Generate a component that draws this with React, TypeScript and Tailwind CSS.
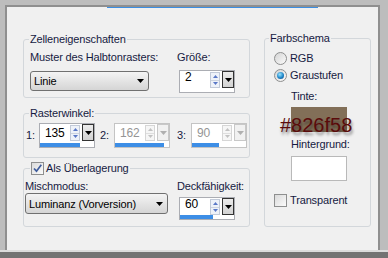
import React from "react";

const LBL = "text-[#161a42]";

function Tri({ color = "#000", w = 7, h = 4, up = false }: { color?: string; w?: number; h?: number; up?: boolean }) {
  return (
    <svg width={w} height={h} viewBox={`0 0 ${w} ${h}`} className="block">
      <path d={up ? `M${w / 2} 0L${w} ${h}H0Z` : `M0 0H${w}L${w / 2} ${h}Z`} fill={color} />
    </svg>
  );
}

function Dropdown({ text, cls }: { text: string; cls: string }) {
  return (
    <div
      className={`flex items-center justify-between rounded-[3px] border border-[#707070] bg-linear-to-b from-[#f4f4f4] to-[#d5d5d5] pl-[3px] pr-[4px] text-[11px] leading-[14px] text-black ${cls}`}
    >
      <span className="whitespace-nowrap">{text}</span>
      <Tri />
    </div>
  );
}

function Spinner({
  value,
  disabled = false,
  bar = 0,
  tall = false,
}: {
  value: string;
  disabled?: boolean;
  bar?: number;
  tall?: boolean;
}) {
  const arrowColor = disabled ? "#c2c2c2" : "#5a78c6";
  return (
    <div
      className={`flex flex-col w-[56px] ${tall ? "h-[25px]" : "h-[23px]"} bg-white border ${
        disabled ? "border-[#c4c4c4]" : "border-[#abadb3]"
      }`}
    >
      <div className="flex items-start">
        <div
          className={`flex-1 pl-[5px] ${tall ? "pt-[3px]" : "pt-0"} text-[12px] leading-[12px] ${
            disabled ? "text-[#959595]" : "text-black"
          }`}
        >
          {value}
        </div>
        <div
          className={`mt-[1px] flex flex-col w-[10px] h-[16px] border ${
            disabled ? "border-[#d6d6d6] bg-[#f6f6f6]" : "border-[#c2cad8] bg-[#eef2f9]"
          }`}
        >
          <div className="flex-1 flex items-center justify-center">
            <Tri color={arrowColor} w={5} h={3} up />
          </div>
          <div className={`h-px ${disabled ? "bg-[#dedede]" : "bg-[#ccd3df]"}`} />
          <div className="flex-1 flex items-center justify-center">
            <Tri color={arrowColor} w={5} h={3} />
          </div>
        </div>
        <div
          className={`ml-[2px] w-[12px] h-[17px] border flex items-center justify-center ${
            disabled ? "border-[#c8c8c8] bg-[#f1f1f1]" : "border-[#333333] bg-linear-to-b from-[#ececec] to-[#d2d2d2]"
          }`}
        >
          <Tri color={disabled ? "#b0b0b0" : "#000"} />
        </div>
      </div>
      <div className="mt-auto h-[4px] bg-[#3d8ee6]" style={{ width: bar }} />
    </div>
  );
}

function Check({ checked = false }: { checked?: boolean }) {
  return (
    <div className="w-[13px] h-[13px] shrink-0 border border-[#8e8f8f] bg-linear-to-br from-[#dadada] to-[#fbfbfb] flex items-center justify-center">
      {checked && (
        <svg width="11" height="11" viewBox="0 0 11 11" className="block">
          <path d="M2 5.5L4.5 8.2L9.3 1.8" stroke="#3f5c9c" strokeWidth="1.7" fill="none" />
        </svg>
      )}
    </div>
  );
}

function Radio({ on = false }: { on?: boolean }) {
  return (
    <div className="w-[13px] h-[13px] shrink-0 rounded-full border border-[#8e8f8f] bg-linear-to-br from-[#d4d4d4] to-[#fbfbfb] flex items-center justify-center">
      {on && (
        <div className="w-[7px] h-[7px] rounded-full bg-[radial-gradient(circle_at_40%_35%,#9be4ff,#1e86c8_55%,#0d3f7a)]" />
      )}
    </div>
  );
}

const FS = "border border-[#d3d7db] rounded-[3px]";
const LEG = "leading-[14px] px-[1px] whitespace-nowrap";

export default function App() {
  return (
    <div className="w-[388px] h-[258px] bg-[#bdbdbd] flex flex-col overflow-hidden font-['Liberation_Sans',Arial,sans-serif] text-[11px] tracking-[-0.15px]">
      <div className="h-[250px] flex pl-[5px] pt-[5px] pr-[8px]">
        <div className="flex-1 flex flex-col bg-[#f0f0f0] border-l-2 border-t-2 border-r-2 border-[#8f8f8f]">
          <div className="h-px flex">
            <div className="ml-[100px] w-[211px] bg-[#3c8fe3]" />
          </div>
          <div className="flex pl-[16px] pt-[23px]">
            {/* left column */}
            <div className="w-[227px] mt-px flex flex-col">
              <fieldset className={`${FS} h-[66px]`}>
                <legend className={`${LEG} ml-[5px] ${LBL}`}>Zelleneigenschaften</legend>
                <div className="flex pt-[4px]">
                  <div className="ml-[6px] w-[119px] flex flex-col">
                    <div className={`leading-[14px] whitespace-nowrap ${LBL}`}>Muster des Halbtonrasters:</div>
                    <Dropdown text="Linie" cls="mt-[7px] h-[20px]" />
                  </div>
                  <div className="ml-[28px] flex flex-col">
                    <div className={`leading-[14px] whitespace-nowrap ${LBL}`}>Größe:</div>
                    <div className="mt-[6px] ml-[2px]">
                      <Spinner value="2" />
                    </div>
                  </div>
                </div>
              </fieldset>

              <fieldset className={`${FS} h-[52px] mt-[8px]`}>
                <legend className={`${LEG} ml-[5px] ${LBL}`}>Rasterwinkel:</legend>
                <div className="flex items-start pt-[3px]">
                  <div className={`w-[15px] pl-[2px] mt-[5px] leading-[14px] ${LBL}`}>1:</div>
                  <Spinner value="135" bar={40} tall />
                  <div className={`ml-[5px] w-[14px] mt-[5px] leading-[14px] ${LBL}`}>2:</div>
                  <Spinner value="162" bar={49} tall disabled />
                  <div className={`ml-[7px] w-[14px] mt-[5px] leading-[14px] ${LBL}`}>3:</div>
                  <Spinner value="90" bar={27} tall disabled />
                </div>
              </fieldset>

              <fieldset className={`${FS} h-[66px] mt-[3px]`}>
                <legend className={`${LEG} ml-[6px] flex items-center gap-[2px] ${LBL}`}>
                  <Check checked />
                  <span>Als Überlagerung</span>
                </legend>
                <div className="flex pt-[4px]">
                  <div className="ml-[1px] w-[143px] flex flex-col">
                    <div className={`leading-[14px] whitespace-nowrap ${LBL}`}>Mischmodus:</div>
                    <Dropdown text="Luminanz (Vorversion)" cls="h-[21px]" />
                  </div>
                  <div className="ml-[9px] flex flex-col">
                    <div className={`leading-[14px] whitespace-nowrap ${LBL}`}>Deckfähigkeit:</div>
                    <div className="mt-[4px] ml-[2px]">
                      <Spinner value="60" bar={33} />
                    </div>
                  </div>
                </div>
              </fieldset>
            </div>

            {/* right column */}
            <fieldset className={`${FS} ml-[14px] w-[107px] h-[196px]`}>
              <legend className={`${LEG} ml-[4px] ${LBL}`}>Farbschema</legend>
              <div className={`flex flex-col pl-[9px] pt-[6px] whitespace-nowrap ${LBL}`}>
                <div className="flex items-center h-[14px] gap-[3px]">
                  <Radio />
                  <span>RGB</span>
                </div>
                <div className="flex items-center h-[14px] gap-[3px] mt-[3px]">
                  <Radio on />
                  <span>Graustufen</span>
                </div>
                <div className="ml-[17px] flex flex-col">
                  <div className="mt-[7px] leading-[14px]">Tinte:</div>
                  <div className="relative mt-[4px] w-[56px] h-[25px] bg-[#826f58]">
                    <span className="absolute left-[-11px] top-[8px] text-[20px] leading-[20px] tracking-normal text-[#5a0b0b] whitespace-nowrap [text-shadow:1px_3px_3px_rgba(0,0,0,0.45)]">
                      #826f58
                    </span>
                  </div>
                  <div className="mt-[5px] leading-[14px]">Hintergrund:</div>
                  <div className="mt-[5px] w-[56px] h-[25px] bg-white border border-[#b9b9b9]" />
                </div>
                <div className="flex items-center h-[14px] gap-[3px] mt-[12px]">
                  <Check />
                  <span>Transparent</span>
                </div>
              </div>
            </fieldset>
          </div>
        </div>
      </div>
      <div className="h-[2px] bg-[#dcdcdc]" />
      <div className="flex-1 bg-[#737373]" />
    </div>
  );
}
